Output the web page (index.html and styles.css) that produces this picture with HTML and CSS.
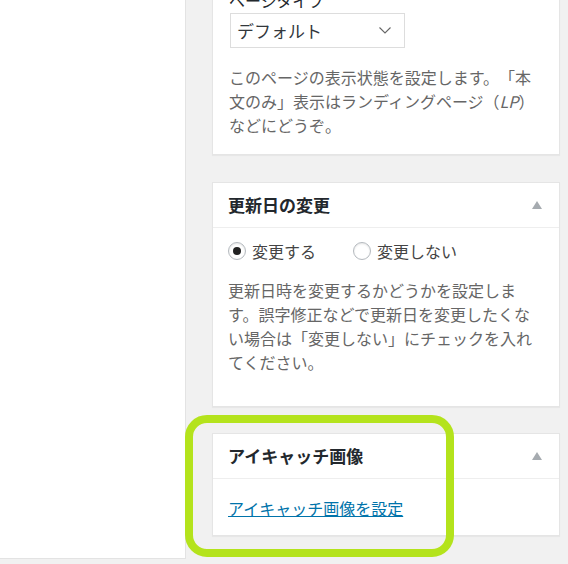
FILE: index.html
```html
<!DOCTYPE html>
<html lang="ja">
<head>
<meta charset="utf-8">
<title>投稿編集</title>
<link rel="stylesheet" href="styles.css">
</head>
<body>
<div class="layout">
  <div class="editor"></div>
  <div class="sidebar">
    <div class="panel panel-type">
      <div class="field-label">ページタイプ</div>
      <div class="select">
        <span class="select-text">デフォルト</span>
        <svg class="chevron" width="12" height="7" viewBox="0 0 12 7"><polyline points="0.5,0.5 6,6 11.5,0.5" fill="none" stroke="#666" stroke-width="1.1"/></svg>
      </div>
      <p class="desc">このページの表示状態を設定します。「本<br>文のみ」表示はランディングページ（<i>LP</i>）<br>などにどうぞ。</p>
    </div>

    <div class="panel panel-update">
      <div class="panel-head">
        <h2 class="panel-title">更新日の変更</h2>
        <span class="toggle"></span>
      </div>
      <div class="panel-body">
        <div class="radios">
          <label class="radio"><span class="radio-dot checked"></span>変更する</label>
          <label class="radio"><span class="radio-dot"></span>変更しない</label>
        </div>
        <p class="desc">更新日時を変更するかどうかを設定しま<br>す。誤字修正などで更新日を変更したくな<br>い場合は「変更しない」にチェックを入れ<br>てください。</p>
      </div>
    </div>

    <div class="panel panel-thumb">
      <div class="panel-head">
        <h2 class="panel-title">アイキャッチ画像</h2>
        <span class="toggle"></span>
      </div>
      <div class="panel-body thumb-body">
        <a class="thumb-link" href="#">アイキャッチ画像を設定</a>
      </div>
    </div>
  </div>
  <div class="highlight"></div>
</div>
</body>
</html>
```

FILE: styles.css
```css
* { box-sizing: border-box; }

html, body {
  margin: 0;
  padding: 0;
}

body {
  background: #f1f1f1;
  font-family: "Noto Sans CJK JP", "Noto Sans", sans-serif;
  font-size: 16px;
  color: #555;
  width: 568px;
  height: 564px;
  overflow: hidden;
  text-spacing-trim: space-all;
}

.layout {
  position: relative;
  display: flex;
  align-items: flex-start;
  height: 564px;
}

.editor {
  width: 186px;
  height: 559px;
  flex: none;
  background: #fff;
  border-right: 1px solid #e3e3e3;
  border-bottom: 1px solid #e3e3e3;
}

.sidebar {
  width: 348px;
  margin-left: 26px;
  flex: none;
  display: flex;
  flex-direction: column;
  gap: 26px;
}

.panel {
  background: #fff;
  border: 1px solid #e5e5e5;
  box-shadow: 0 1px 1px rgba(0, 0, 0, 0.04);
}

.panel-type {
  margin-top: -13px;
  margin-bottom: 1px;
  padding: 0 16px 17px;
}

.field-label {
  line-height: 24px;
  color: #23282d;
}

.select {
  margin-top: 1px;
  margin-left: 1px;
  width: 175px;
  height: 35px;
  border: 1px solid #ddd;
  background: #fff;
  display: flex;
  align-items: center;
  justify-content: space-between;
  padding: 0 13px 0 6px;
}

.select-text {
  font-size: 17px;
  color: #32373c;
  line-height: 1;
}

.chevron { display: block; }

.desc {
  margin: 17px 0 0;
  line-height: 24px;
  color: #666;
  white-space: nowrap;
}

.desc i { font-style: italic; }

.panel-head {
  height: 45px;
  border-bottom: 1px solid #eee;
  display: flex;
  align-items: center;
  justify-content: space-between;
  padding: 0 17px 0 15px;
}

.panel-title {
  margin: 0;
  font-size: 17px;
  font-weight: bold;
  color: #23282d;
  line-height: 24px;
}

.toggle {
  width: 0;
  height: 0;
  border-left: 5px solid transparent;
  border-right: 5px solid transparent;
  border-bottom: 8px solid #a6abb0;
}

.panel-body {
  padding: 11px 16px 32px 15px;
}

.radios {
  display: flex;
  align-items: center;
  gap: 37px;
  line-height: 24px;
  color: #444;
}

.radio {
  display: flex;
  align-items: center;
  gap: 6px;
}

.radio-dot {
  width: 18px;
  height: 18px;
  border-radius: 50%;
  border: 1px solid #b4b9be;
  background: #fff;
  box-shadow: inset 0 1px 2px rgba(0, 0, 0, 0.1);
  display: flex;
  align-items: center;
  justify-content: center;
}

.radio-dot.checked::after {
  content: "";
  width: 8px;
  height: 8px;
  border-radius: 50%;
  background: #222;
}

.panel-update .desc {
  margin-top: 15px;
}

.thumb-body {
  padding: 17px 16px 15px 15px;
  line-height: 24px;
}

.thumb-link {
  color: #0073aa;
  text-decoration: underline;
}

.highlight {
  position: absolute;
  left: 185px;
  top: 415px;
  width: 269px;
  height: 142px;
  border: 8px solid #b4e31c;
  border-radius: 22px;
  pointer-events: none;
}
```
